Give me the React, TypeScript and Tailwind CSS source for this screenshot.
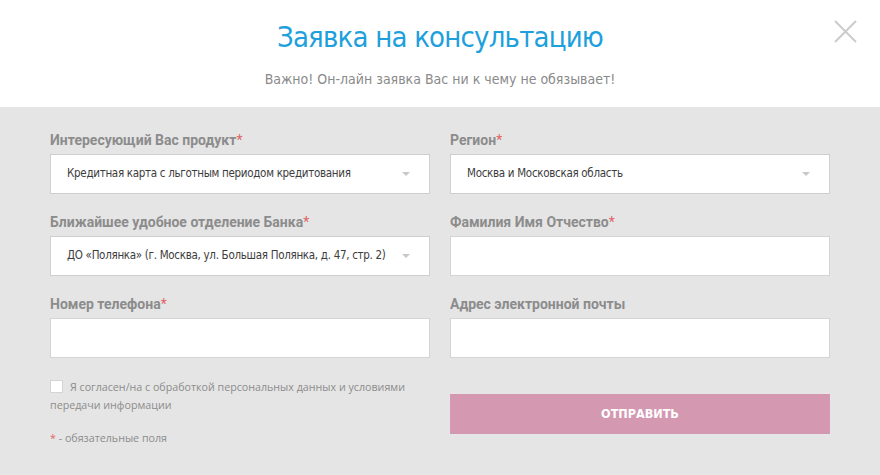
const narrow = { fontFamily: '"DejaVu Sans Condensed", "DejaVu Sans", sans-serif', fontStretch: 'condensed' };

function Label({ text, required }: { text: string; required?: boolean }) {
  return (
    <div className="h-5 mb-1 text-[14px] leading-5 font-bold text-[#8c8c8c]" style={{ fontFamily: 'Roboto, sans-serif' }}>
      {text}
      {required && <span className="text-[#e06666] font-normal">*</span>}
    </div>
  );
}

function Select({ value }: { value: string }) {
  return (
    <div className="h-10 bg-white border border-[#cfcfcf] flex items-center pl-4 pr-[19px]">
      <span className="flex-1 whitespace-nowrap text-[11.5px] tracking-[-0.3px] text-[#3c3c3c]" style={narrow}>{value}</span>
      <span className="w-0 h-0 border-l-[4px] border-r-[4px] border-t-[4px] border-l-transparent border-r-transparent border-t-[#c8c8c8]" />
    </div>
  );
}

function Input() {
  return <div className="h-10 bg-white border border-[#d4d4d4]" />;
}

export default function App() {
  return (
    <div className="w-[880px] h-[475px] bg-[#e5e5e5] overflow-hidden">
      {/* header */}
      <div className="relative h-[107px] bg-white flex flex-col items-center">
        <h1 className="mt-[17px] text-[29px] leading-[40px] tracking-[-0.8px] text-[#1ea0dc]" style={narrow}>Заявка на консультацию</h1>
        <p className="mt-[12px] text-[14px] text-[#8a8a8a]" style={narrow}>Важно! Он-лайн заявка Вас ни к чему не обязывает!</p>
        <button className="absolute right-[23px] top-[20px] w-[23px] h-[23px]">
          <svg viewBox="0 0 23 23" className="w-full h-full" stroke="#cbcbcb" strokeWidth="2">
            <line x1="1" y1="1" x2="22" y2="22" />
            <line x1="22" y1="1" x2="1" y2="22" />
          </svg>
        </button>
      </div>

      {/* form */}
      <div className="px-[50px] pt-[23px] grid grid-cols-2 gap-x-5">
        <div>
          <Label text="Интересующий Вас продукт" required />
          <Select value="Кредитная карта с льготным периодом кредитования" />
        </div>
        <div>
          <Label text="Регион" required />
          <Select value="Москва и Московская область" />
        </div>
        <div className="mt-[18px]">
          <Label text="Ближайшее удобное отделение Банка" required />
          <Select value="ДО «Полянка» (г. Москва, ул. Большая Полянка, д. 47, стр. 2)" />
        </div>
        <div className="mt-[18px]">
          <Label text="Фамилия Имя Отчество" required />
          <Input />
        </div>
        <div className="mt-[18px]">
          <Label text="Номер телефона" required />
          <Input />
        </div>
        <div className="mt-[18px]">
          <Label text="Адрес электронной почты" />
          <Input />
        </div>
        <div className="mt-[20px] text-[10.7px] leading-[18px] text-[#8c8c8c]" style={{ fontFamily: '"Open Sans", sans-serif' }}>
          <div>
            <span className="inline-block align-[-2px] w-[13px] h-[13px] bg-white border border-[#d4d4d4] mr-[7px]" />
            Я согласен/на с обработкой персональных данных и условиями передачи информации
          </div>
          <div className="mt-[15px]">
            <span className="text-[#e06666]">*</span> - обязательные поля
          </div>
        </div>
        <div className="mt-[36px]">
          <button className="w-full h-10 bg-[#d498b1] text-white font-bold text-[12.5px] uppercase" style={narrow}>Отправить</button>
        </div>
      </div>
    </div>
  );
}
